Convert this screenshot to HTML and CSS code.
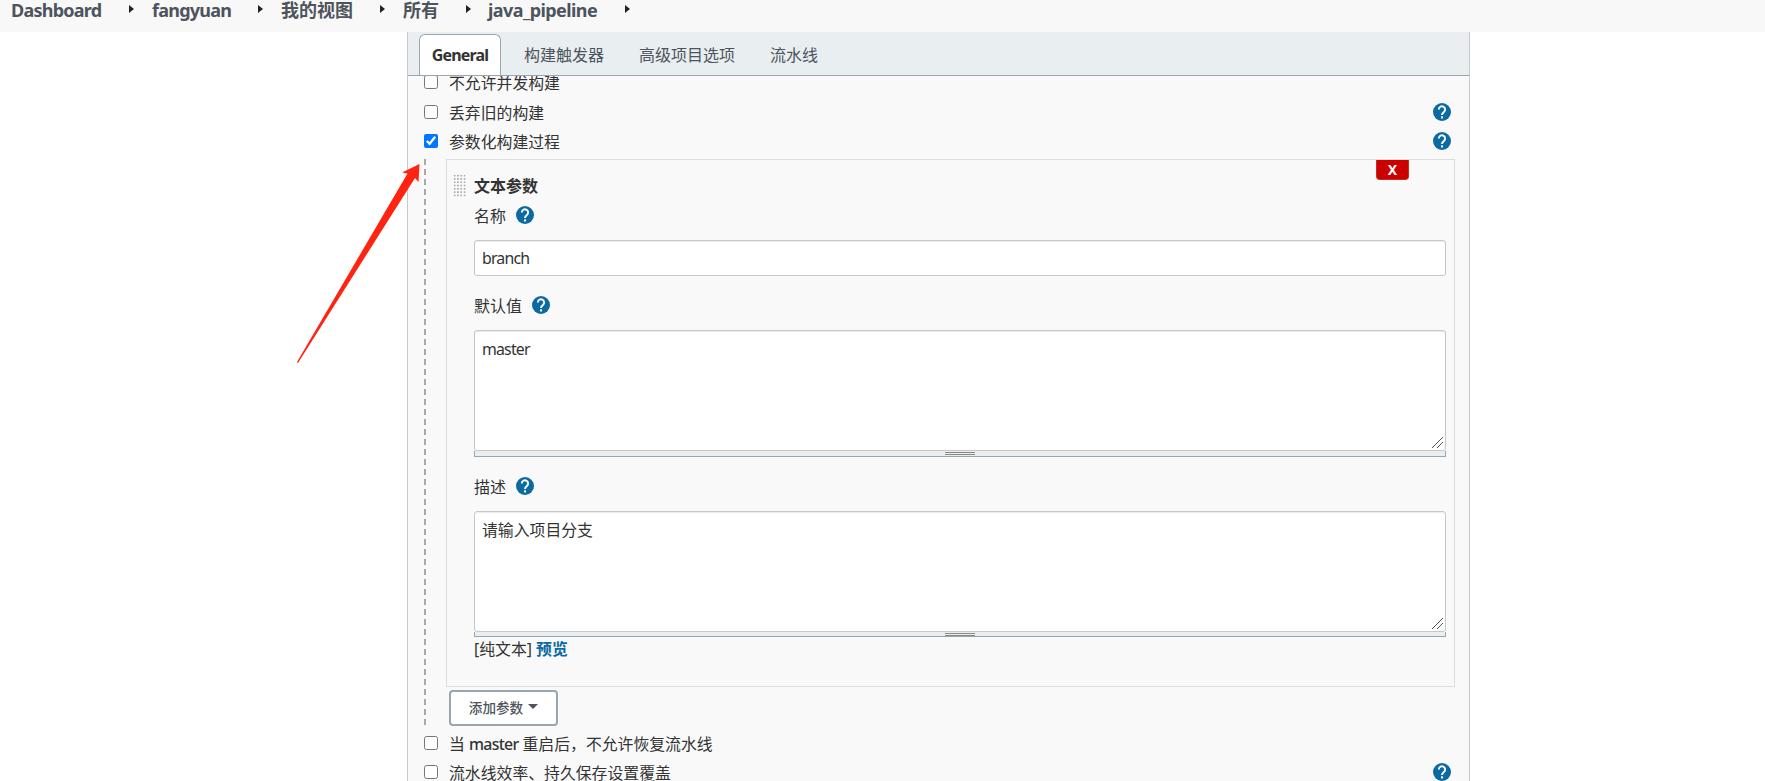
FILE: index.html
```
<!DOCTYPE html>
<html lang="zh-CN">
<head>
  <meta charset="UTF-8">
  <title>java_pipeline Config [Jenkins]</title>
  <link rel="stylesheet" href="styles.css">
</head>
<body>
  <!-- shared help icon -->
  <svg class="defs" width="0" height="0">
    <symbol id="help" viewBox="0 0 24 24">
      <circle cx="12" cy="12" r="12" fill="#0b6aa2"/>
      <path d="M7.8 8.6a4.2 4.2 0 1 1 6.9 3.2c-1.7 1.3-2.7 2-2.7 4.2" fill="none" stroke="#fff" stroke-width="2.6"/>
      <rect x="10.7" y="17.8" width="2.7" height="2.8" fill="#fff"/>
    </symbol>
  </svg>

  <ul class="breadcrumbs">
    <li class="crumb-dashboard">Dashboard</li>
    <li class="crumb-user">fangyuan</li>
    <li class="crumb-views">我的视图</li>
    <li class="crumb-all">所有</li>
    <li class="crumb-job">java_pipeline</li>
  </ul>

  <main class="config">
    <nav class="tabs">
      <a class="tab active"><span>General</span></a>
      <a class="tab">构建触发器</a>
      <a class="tab">高级项目选项</a>
      <a class="tab">流水线</a>
    </nav>

    <div class="config-body">
      <div class="option">
        <input type="checkbox"><label>不允许并发构建</label>
      </div>
      <div class="option">
        <input type="checkbox"><label>丢弃旧的构建</label>
        <svg class="help"><use href="#help"/></svg>
      </div>
      <div class="option">
        <input type="checkbox" checked><label>参数化构建过程</label>
        <svg class="help"><use href="#help"/></svg>
      </div>

      <!-- Parameters -->
      <div class="nested">
        <div class="param">
          <button class="delete">X</button>
          <div class="handle"></div>
          <div class="fields">
            <div class="param-title">文本参数</div>
            <div class="field-label">名称<svg class="help"><use href="#help"/></svg></div>
            <input class="text-input" type="text" value="branch">
            <div class="field-label label-default">默认值<svg class="help"><use href="#help"/></svg></div>
            <textarea class="latin">master</textarea>
            <div class="resizer"><i></i></div>
            <div class="field-label label-desc">描述<svg class="help"><use href="#help"/></svg></div>
            <textarea>请输入项目分支</textarea>
            <div class="resizer short"><i></i></div>
            <div class="markup">[纯文本] <a>预览</a></div>
          </div>
        </div>
        <button class="add">添加参数<span class="caret"></span></button>
      </div>

      <div class="option">
        <input type="checkbox"><label>当 <span class="word">master</span> 重启后，不允许恢复流水线</label>
      </div>
      <div class="option">
        <input type="checkbox"><label>流水线效率、持久保存设置覆盖</label>
        <svg class="help"><use href="#help"/></svg>
      </div>
    </div>
  </main>

  <svg class="pointer" width="126" height="204" viewBox="0 0 126 204">
    <path d="M1 202L111.5 13.5L106 12.5L123.5 4L122.5 22L119 18L2 203Z" fill="#ff2412"/>
  </svg>
</body>
</html>
```

FILE: styles.css
```
* {
  margin: 0;
  padding: 0;
  box-sizing: border-box;
}
body {
  height: 781px;
  overflow: hidden;
  background: #fff;
  color: #333;
  font: 15.85px/24px "Noto Sans", "Noto Sans CJK SC", sans-serif;
}
button,
input,
textarea {
  font: inherit;
  color: inherit;
}
.defs {
  position: absolute;
}

/* Breadcrumbs */
.breadcrumbs {
  display: flex;
  height: 32px;
  padding-left: 11px;
  background: #f8f8f8;
  list-style: none;
  color: #4d545d;
  font-size: 18px;
  font-weight: bold;
  line-height: 20px;
}
.breadcrumbs li {
  display: flex;
  justify-content: space-between;
  flex: none;
  white-space: nowrap;
}
.breadcrumbs li::after {
  content: "";
  width: 0;
  height: 0;
  margin: 5px 18px 0 0;
  border: 4px solid transparent;
  border-left: 5px solid #222;
  border-right: 0;
}
.crumb-dashboard {
  width: 141px;
  letter-spacing: -0.75px;
}
.crumb-user {
  width: 129px;
  letter-spacing: -0.75px;
}
.crumb-views {
  width: 122px;
}
.crumb-all {
  width: 85px;
}
.crumb-job {
  width: 160px;
  letter-spacing: -0.58px;
}
.breadcrumbs .crumb-all::after {
  margin-right: 17px;
}

/* Config panel */
.config {
  width: 1063px;
  height: 749px;
  margin-left: 407px;
  overflow: hidden;
  background: #f9f9f9;
  border: solid #c6c9cb;
  border-width: 0 1px;
}
.tabs {
  display: flex;
  align-items: flex-end;
  height: 44px;
  padding-left: 11px;
  background: #e9eef1;
  border-bottom: 1px solid #98a6b1;
  color: #4d545d;
}
.tab {
  height: 41px;
  margin-left: 23px;
  margin-right: 12px;
  font-size: 16px;
  line-height: 43px;
}
.tab.active {
  width: 82px;
  margin: 0;
  background: #fff;
  border: 1px solid #98a6b1;
  border-bottom: 0;
  border-radius: 6px 6px 0 0;
  color: #333;
  font-weight: bold;
  letter-spacing: -0.8px;
  line-height: 41px;
  text-align: center;
}
.config-body {
  height: 705px;
  overflow: hidden;
}
.option {
  display: flex;
  align-items: center;
  height: 29px;
  padding: 0 18px 0 16px;
}
.option:first-child {
  height: 30px;
  margin-top: -8px;
  padding-bottom: 1px;
}
.option input {
  width: 14px;
  height: 14px;
  margin: 0 11px 1px 0;
}
.help {
  width: 18px;
  height: 18px;
}
.option .help {
  margin: 0 0 1px auto;
}

/* Nested parameter block */
.nested {
  height: 567px;
  margin: 3px 14px 3px 16px;
  padding-left: 22px;
  background: repeating-linear-gradient(#a9a9a9 0 6px, transparent 6px 10px) left / 2px 100% no-repeat;
}
.param {
  position: relative;
  display: flex;
  height: 528px;
  padding: 14px 8px 0 6px;
  border: 1px solid #ddd;
}
.delete {
  position: absolute;
  top: 0;
  right: 45px;
  width: 33px;
  height: 20px;
  background: #c00;
  border: 1px solid #c62f1c;
  border-top: 0;
  border-radius: 0 0 4px 4px;
  color: #fff;
  font-size: 14px;
  font-weight: bold;
  line-height: 19px;
}
.handle {
  width: 13px;
  height: 23px;
  margin-right: 8px;
  background: radial-gradient(circle, #aaa 0.9px, transparent 1.3px) 0 0 / 3.3px 3.3px;
}
.fields {
  flex: 1;
}
.param-title {
  font-size: 16px;
  font-weight: bold;
}
.field-label {
  display: flex;
  align-items: center;
  gap: 10px;
  height: 34px;
  padding-top: 2px;
  font-size: 16px;
}
.field-label .help {
  margin-bottom: 2px;
}
.text-input {
  display: block;
  width: 972px;
  height: 36px;
  margin-top: 8px;
  padding: 0 7px;
  background: #fff;
  border: 1px solid #c5c7c9;
  border-radius: 3px;
  box-shadow: inset 0 1px 1px rgba(0, 0, 0, 0.08);
  letter-spacing: -0.8px;
}
.label-default,
.label-desc {
  margin-top: 12px;
}
textarea {
  display: block;
  width: 972px;
  height: 121px;
  margin-top: 8px;
  padding: 6px 7px;
  background: #fff;
  border: 1px solid #c5c7c9;
  border-radius: 3px;
  box-shadow: inset 0 1px 1px rgba(0, 0, 0, 0.08);
}
textarea::-webkit-resizer {
  background:
    linear-gradient(135deg, transparent 47%, #555 47% 53%, transparent 53%) 2px 2px / 11px 11px no-repeat,
    linear-gradient(135deg, transparent 45%, #555 45% 55%, transparent 55%) 7px 7px / 6px 6px no-repeat;
}
.latin {
  letter-spacing: -0.8px;
}
.resizer {
  display: flex;
  align-items: flex-start;
  justify-content: center;
  width: 972px;
  height: 6px;
  padding-top: 1px;
  background: #e9eef1;
  border: 1px solid #98a6b1;
  border-top: 0;
}
.resizer.short {
  height: 5px;
}
.resizer i {
  width: 30px;
  height: 3px;
  border: solid #878a80;
  border-width: 1px 0;
}
.markup a {
  color: #0b6aa2;
  font-weight: bold;
}
.add {
  display: flex;
  align-items: center;
  justify-content: center;
  width: 109px;
  height: 36px;
  margin: 3px 0 0 3px;
  background: #fff;
  border: 2px solid #98a6b1;
  border-radius: 4px;
  color: #4d545d;
  font-size: 13.6px;
  font-weight: 500;
}
.caret {
  margin: -3px 0 0 5px;
  border: 5px solid transparent;
  border-top-color: #4d545d;
  border-bottom: 0;
}
.word {
  font-weight: 500;
  letter-spacing: -0.7px;
}

/* Arrow pointing at the enabled option */
.pointer {
  position: absolute;
  left: 296px;
  top: 160px;
}
```
